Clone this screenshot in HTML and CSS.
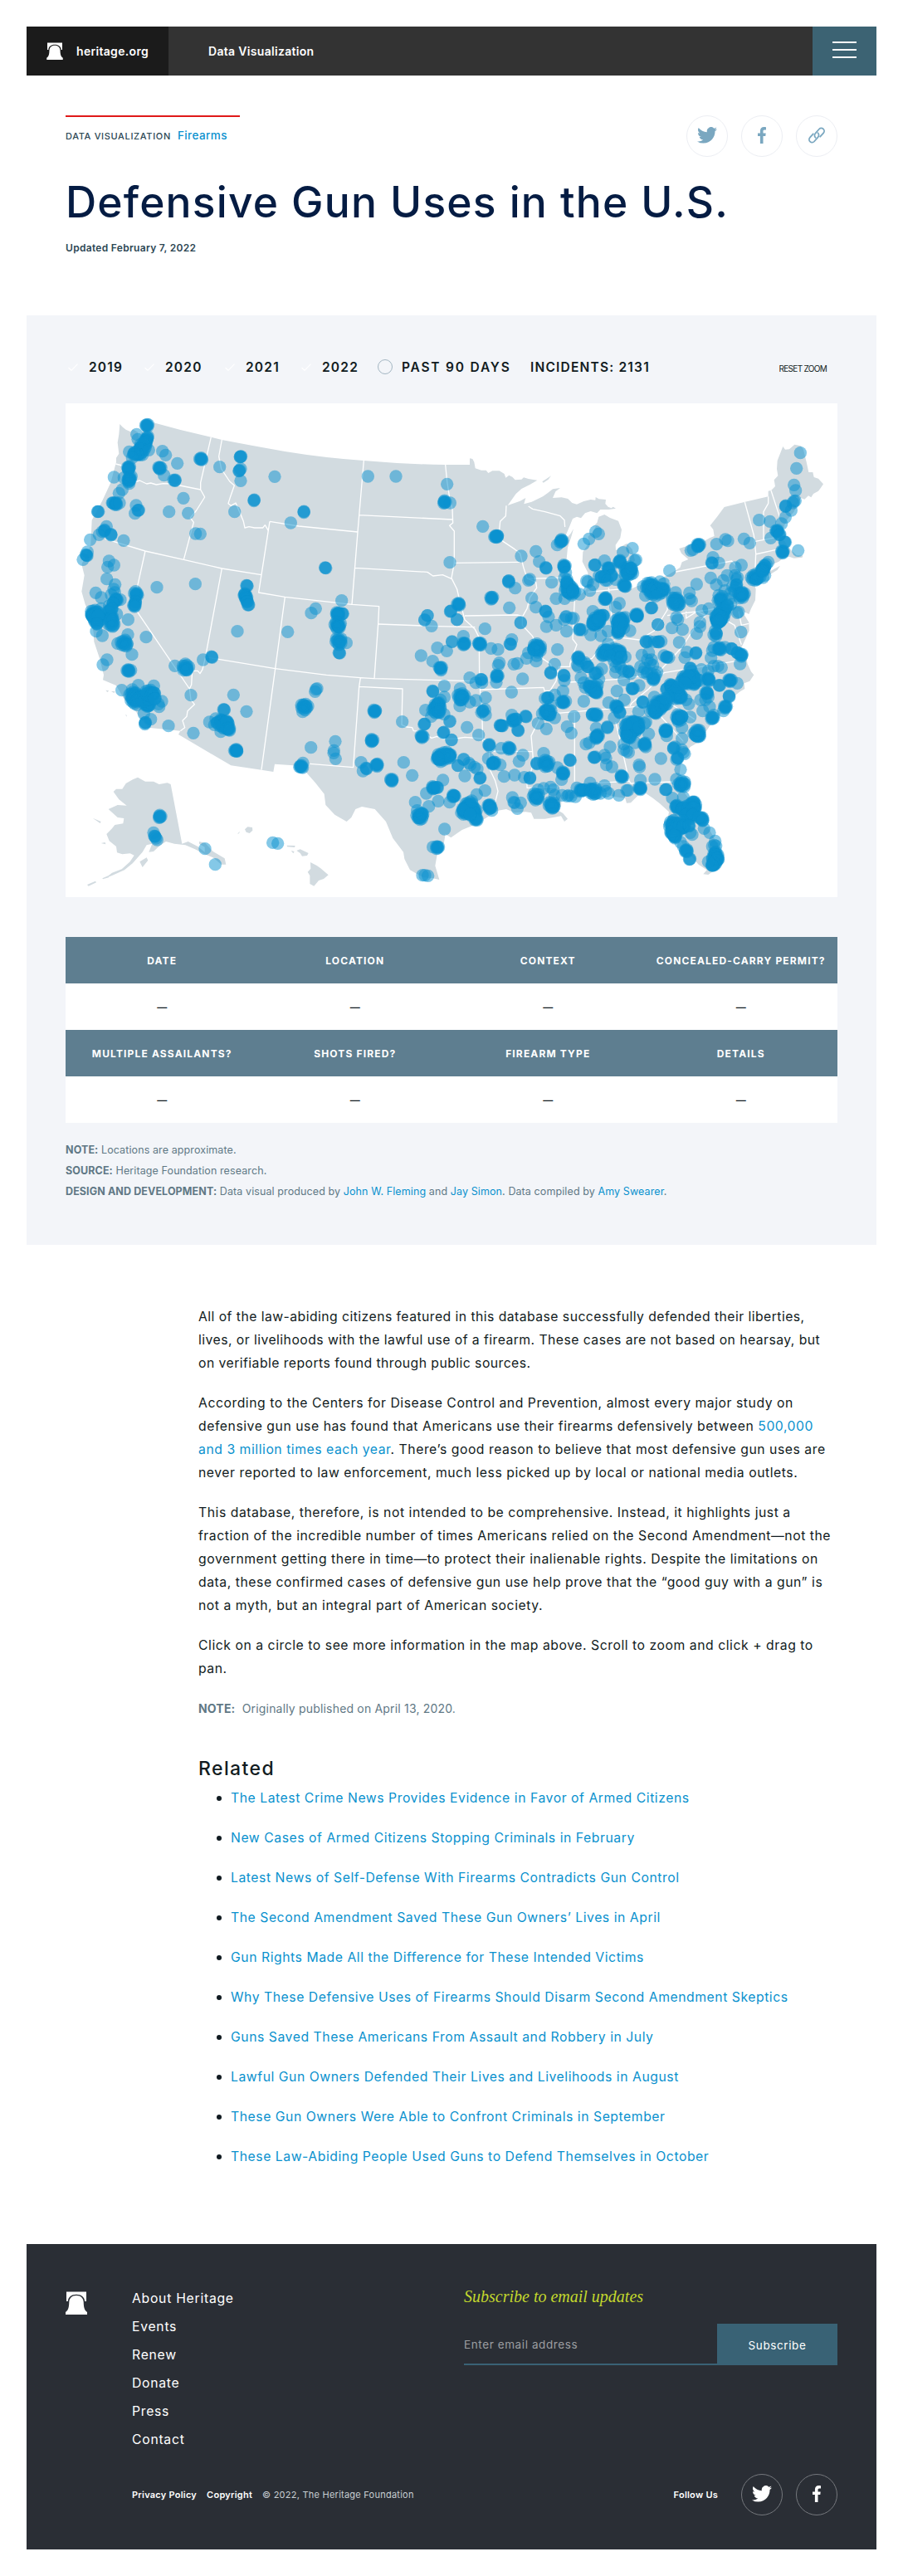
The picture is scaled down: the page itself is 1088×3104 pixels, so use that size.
FILE: index.html
```html
<!DOCTYPE html>
<html lang="en">
<head>
<meta charset="utf-8">
<title>Defensive Gun Uses in the U.S.</title>
<link rel="stylesheet" href="styles.css">
</head>
<body>
<svg class="sprite" aria-hidden="true">
  <symbol id="bell" viewBox="0 0 26 28"><path d="M1 12V0.600H25V12H23.200C22.800 7 19 3.800 13 3.800S3.200 7 2.800 12Z"/><path d="M13 5C7.500 5 4.500 8.500 4.300 13C4.100 19 3.500 22.500 0 25V28H26V25C22.500 22.500 21.900 19 21.700 13C21.500 8.500 18.500 5 13 5Z"/></symbol>
  <symbol id="twitter" viewBox="0 0 24 20"><path d="M24 2.400c-.9.400-1.800.700-2.800.8 1-.6 1.800-1.600 2.200-2.700-1 .6-2 1-3.100 1.200A4.900 4.900 0 0 0 11.900 6.200 14 14 0 0 1 1.700 1a4.900 4.900 0 0 0 1.500 6.600c-.8 0-1.600-.2-2.200-.6v.1a4.900 4.900 0 0 0 3.900 4.800c-.7.200-1.500.2-2.200.1a4.900 4.900 0 0 0 4.600 3.400A9.900 9.900 0 0 1 0 17.400 14 14 0 0 0 7.500 19.600c9.100 0 14-7.500 14-14V5c1-.7 1.800-1.600 2.500-2.600z"/></symbol>
  <symbol id="facebook" viewBox="0 0 10 20"><path d="M6.500 20V11H9.300L9.700 7.500H6.500V5.300C6.500 4.200 6.800 3.500 8.300 3.500H10V.2C9.700.100 8.600 0 7.400 0 4.700 0 2.900 1.600 2.900 4.700V7.500H0V11H2.900V20Z"/></symbol>
  <symbol id="link" viewBox="0 0 20 20"><g fill="none" stroke="currentColor" stroke-width="1.800" stroke-linecap="round"><path d="M8.600 12.800A3.600 3.600 0 0 1 8.500 7.600L13 2.500A3.500 3.500 0 0 1 18.100 7.300L14.200 11.700"/><path d="M11.400 7.200A3.600 3.600 0 0 1 11.500 12.400L7 17.500A3.500 3.500 0 0 1 1.900 12.700L5.800 8.300"/></g></symbol>
</svg>

<header class="topbar">
  <a class="brand" href="#"><svg class="brand-logo"><use href="#bell"/></svg><span class="brand-name">heritage.org</span></a>
  <span class="section">Data Visualization</span>
  <button class="menu" aria-label="Menu"><i></i><i></i><i></i></button>
</header>

<section class="hero">
  <div class="hero-row">
    <div class="kicker"><span class="type">DATA VISUALIZATION</span><a class="topic" href="#">Firearms</a></div>
    <div class="share">
      <a class="round" href="#"><svg width="24" height="20"><use href="#twitter"/></svg></a>
      <a class="round" href="#"><svg width="10" height="20"><use href="#facebook"/></svg></a>
      <a class="round" href="#"><svg width="20" height="20"><use href="#link"/></svg></a>
    </div>
  </div>
  <h1>Defensive Gun Uses in the U.S.</h1>
  <p class="updated">Updated February 7, 2022</p>
</section>

<section class="panel">
  <div class="filters">
    <label class="year y19"><svg class="tick" viewBox="0 0 12 9"><path d="M.500 5 4 8.300 11.500.700"/></svg><span>2019</span></label>
    <label class="year y20"><svg class="tick" viewBox="0 0 12 9"><path d="M.500 5 4 8.300 11.500.700"/></svg><span>2020</span></label>
    <label class="year y21"><svg class="tick" viewBox="0 0 12 9"><path d="M.500 5 4 8.300 11.500.700"/></svg><span>2021</span></label>
    <label class="year y22"><svg class="tick" viewBox="0 0 12 9"><path d="M.500 5 4 8.300 11.500.700"/></svg><span>2022</span></label>
    <label class="recent"><i class="ring"></i><span class="recent-text">PAST 90 DAYS</span></label>
    <span class="count">INCIDENTS: 2131</span>
    <button class="reset">RESET ZOOM</button>
  </div>

  <svg class="map" viewBox="57 258 2790 1785" role="img" aria-label="Map of incidents">
    <g class="land">
      <path d="M253 333L262 343 275 353 292 361 300 352 318 362 322 385 334 360 345 325 375 328Q475 357 583 380L622 390Q720 409 850 432 990 455 1135 465 1280 478 1430 480L1518 480 1518 457 1528 459 1534 470 1538 493 1560 500 1577 500 1585 510 1600 502 1625 502 1643 513 1648 527 1660 518 1672 524 1682 535 1705 533 1713 526 1730 531 1762 536 1735 552 1705 567 1685 585 1655 627 1700 611 1720 600 1714 622 1742 614 1782 595 1800 582 1818 568 1845 564 1828 577 1818 600 1850 598 1873 603 1888 618 1905 623 1930 612 1955 606 1972 608 1973 597 1985 604 2010 606 2008 621 2018 632 2030 637 2036 632 2046 638 2020 642 1990 642 1978 655 1955 648 1935 655 1920 673 1905 668 1890 675 1880 700 1865 735 1862 752 1882 730 1893 712 1885 740 1872 780 1868 820 1862 865 1870 900 1890 935 1920 948 1940 930 1946 900 1945 870 1925 830 1927 795 1950 760 1945 740 1965 720 1975 700 1962 705 1978 690 1984 668 2005 660 2025 672 2055 683 2067 715 2062 745 2045 770 2046 790 2062 778 2085 765 2105 785 2115 825 2095 865 2080 895 2075 925 2100 930 2120 920 2155 908 2200 895 2235 878 2278 852 2285 832 2308 822 2283 800 2275 783 2310 772 2350 765 2385 745 2402 738 2398 714 2387 700 2412 668 2438 633 2510 615 2597 595 2597 575 2608 572 2622 558 2618 535 2632 520 2628 495 2630 465 2650 414 2658 425 2673 424 2692 407 2715 412 2724 425 2735 470 2743 507 2758 507 2762 525 2778 530 2796 550 2788 562 2778 575 2760 585 2752 598 2742 592 2728 605 2715 600 2700 625 2690 650 2668 675 2655 700 2650 725 2642 742 2655 755 2668 775 2680 790 2700 808 2722 808 2720 815 2690 818 2672 812 2655 815 2635 830 2595 848 2575 875 2598 868 2640 845 2630 860 2590 885 2545 905 2552 930 2550 970 2535 1000 2527 1020 2510 1012 2500 1000 2512 1025 2527 1050 2528 1080 2505 1130 2500 1140 2515 1160 2522 1200 2535 1228 2545 1240 2530 1262 2510 1270 2512 1290 2495 1300 2470 1320 2450 1350 2440 1372 2410 1390 2385 1425 2365 1455 2350 1480 2315 1500 2295 1530 2280 1570 2275 1605 2290 1660 2320 1700 2352 1760 2385 1800 2412 1850 2432 1900 2420 1940 2405 1945 2380 1962 2362 1960 2375 1945 2345 1925 2310 1885 2280 1840 2245 1810 2230 1780 2238 1735 2205 1705 2180 1685 2150 1665 2130 1672 2100 1702 2085 1703 2080 1685 2040 1680 2000 1668 1940 1670 1900 1685 1850 1690 1848 1715 1830 1725 1855 1740 1872 1760 1860 1770 1848 1750 1820 1755 1790 1760 1750 1760 1740 1738 1720 1735 1680 1738 1650 1725 1620 1730 1540 1780 1490 1800 1450 1828 1430 1815 1425 1845 1405 1870 1400 1890 1393 1930 1408 1980 1385 1975 1350 1972 1302 1945 1282 1905 1278 1880 1240 1830 1215 1770 1175 1725 1128 1716 1105 1725 1090 1755 1073 1770 1030 1745 997 1710 992 1670 960 1630 925 1590 880 1567 813 1562 808 1590 765 1583 655 1567 465 1455 472 1442 355 1430 330 1400 310 1370 270 1330 240 1278 192 1258 195 1240 180 1180 160 1120 158 1085 140 1010 128 985 115 938 125 880 115 840 148 770 152 680 190 610 220 545 240 470 240 455 250 440 245 400 250 370Z"/>
      <path d="M340 541L372 520 362 533 344 545Z" transform="translate(1440 0)"/>
      <path d="M437 615L478 830 500 822 535 840 560 860 560 842 540 830 540 822 562 828 590 858 632 883 637 905 620 905 590 880 560 868 525 850 490 835 450 830 420 822 400 835 375 858 358 860 370 830 350 835 335 860 300 900 270 925 225 945 200 955 225 935 260 922 290 895 305 872 290 865 262 868 243 862 240 840 215 820 205 795 225 775 235 762 265 757 268 738 245 735 212 705 245 690 278 692 250 670 230 642 240 632 262 632 275 612 300 598 318 590 345 605 375 605 395 615 425 610Z M325 895L350 880 355 890 335 915Z M135 978L165 965 168 970 140 983Z M190 955L213 945 213 952 192 958Z M155 737L185 750 182 756Z M185 828L200 825 202 832Z" transform="translate(0 1020)"/>
      <path d="M705 778L715 769 732 771 733 782 722 792 710 788Z M678 794L687 785 684 793Z M857 836L887 837 885 843 858 841Z M872 855L884 858 880 865Z M892 855L905 850 935 864 930 873 912 875 905 864Z M942 897L965 909 978 918 1007 943 990 957 972 963 955 983 940 975 940 945 932 932 943 920Z M202 275L214 277 208 282Z M222 279L236 279 232 285Z M273 363L278 365 278 371Z" transform="translate(0 1020)"/>
    </g>
    <g class="borders">
      <path d="M238 477L262 483 M300 545 325 537 350 549 365 546 385 552 410 548 440 549 545 570 M583 380L545 545 545 570 560 597 530 645 508 672 520 688 484 823 M200 748L345 792 484 823 622 855 765 878 M622 390L611 450 620 495 650 540 667 555 652 598 645 620 655 628 672 618 690 660 700 685 705 708 720 704 740 708 770 708 778 698 790 718"/>
      <path d="M795 685L765 878 755 942 850 958 1092 985 1190 992 1187 1055 1173 1253 M795 685L900 702 1113 723 M1135 465L1113 723 1092 985 M1117 662L1455 678 M1103 853L1365 868 1385 882 1420 878 1452 892 M1430 480L1436 540 1445 600 1455 640 1457 690 1445 700 1462 720 1462 835 1452 890 1472 930 1480 965 1492 1010 1500 1040 1520 1058 1537 1075 1552 1105 1553 1262 1555 1290 1563 1400 1565 1480"/>
      <path d="M345 792L310 950 315 1010 505 1290 512 1275 515 1225 535 1225 543 1235 552 1220 562 1178 622 855 M505 1290L510 1330 523 1346 498 1370 495 1390 480 1405 488 1430 472 1442 M562 1175L610 1183 815 1217 1000 1240 1123 1250 1173 1253 1500 1261 1552 1261 M850 958L815 1217 765 1583 M1123 1250L1118 1282 1275 1290 1272 1420 1290 1428 1310 1430 1315 1442 1345 1445 1380 1468 1400 1462 1420 1472 1470 1470 1500 1465 1565 1470 1588 1482 1590 1580 1610 1622 1620 1660 1610 1700 M1118 1282L1097 1574 940 1561 M1187 1056L1400 1064 1537 1067"/>
      <path d="M1462 835L1700 832 M1500 1026L1690 1023 1710 1028 M1555 1293L1785 1285 1788 1297 1808 1297 1830 1262 1840 1210 1880 1210 1880 1200 1905 1130 1890 1110 1897 970 M1590 1515L1745 1517 1740 1460 1755 1430 1770 1400 1790 1350 1822 1300 M1745 1517L1748 1560 1725 1635 1725 1648 1835 1645 M1835 1378L2145 1352 2170 1347 2290 1480 M1897 1377L1897 1625 M1880 1266L2060 1255 2220 1232 2480 1190 M2045 1410L2060 1470 2080 1560 2095 1628 M1980 1630L2095 1624 2100 1632 2250 1626 2260 1640"/>
      <path d="M1650 628L1648 665 1628 685 1625 715 1635 755 1680 785 1700 800 1712 850 1725 890 1757 905 1760 925 1735 960 1725 1000 1708 1030 1708 1060 1745 1100 1780 1180 1810 1200 1820 1230 M1725 892L1868 888 M1730 630L1745 640 1790 650 1845 665 1860 680 1862 705 M2020 925L2035 1070 M1945 940L2080 928 M2240 900L2232 1005 2185 1080 2130 1113 2065 1105 2000 1130 1960 1180 1905 1200 M2263 867L2465 828 2480 845 2490 870 M2232 1025L2380 1005 2480 985 M2300 1010L2300 1035 2340 1010 2370 1025 2330 1070 2285 1140 2200 1230 M2512 615L2545 735 2552 800 2550 850 M2597 595L2597 620 2580 650 2580 750 M2607 573L2638 668 M2550 757L2640 740 M2550 804L2635 785 2640 810 M2120 1357L2230 1335 2330 1400 M2097 1352L2105 1340 2165 1290 2220 1232 M2490 1010L2500 1060 2527 1054 M2440 1040L2475 1060 2500 1130"/>
    </g>
    <g class="dots" id="dots"></g>
  </svg>

  <div class="table">
    <div class="tr head"><span>DATE</span><span>LOCATION</span><span>CONTEXT</span><span>CONCEALED-CARRY PERMIT?</span></div>
    <div class="tr"><span>—</span><span>—</span><span>—</span><span>—</span></div>
    <div class="tr head"><span>MULTIPLE ASSAILANTS?</span><span>SHOTS FIRED?</span><span>FIREARM TYPE</span><span>DETAILS</span></div>
    <div class="tr"><span>—</span><span>—</span><span>—</span><span>—</span></div>
  </div>

  <div class="notes">
    <p><b>NOTE:</b> Locations are approximate.</p>
    <p><b>SOURCE:</b> Heritage Foundation research.</p>
    <p><b>DESIGN AND DEVELOPMENT:</b> Data visual produced by <a href="#">John W. Fleming</a> and <a href="#">Jay Simon</a>. Data compiled by <a href="#">Amy Swearer</a>.</p>
  </div>
</section>

<article class="article">
  <p class="lead">All of the law-abiding citizens featured in this database successfully defended their liberties,<br>lives, or livelihoods with the lawful use of a firearm. These cases are not based on hearsay, but<br>on verifiable reports found through public sources.</p>
  <p>According to the Centers for Disease Control and Prevention, almost every major study on<br>defensive gun use has found that Americans use their firearms defensively between <a href="#">500,000<br>and 3 million times each year</a>. There’s good reason to believe that most defensive gun uses are<br>never reported to law enforcement, much less picked up by local or national media outlets.</p>
  <p>This database, therefore, is not intended to be comprehensive. Instead, it highlights just a<br>fraction of the incredible number of times Americans relied on the Second Amendment—not the<br>government getting there in time—to protect their inalienable rights. Despite the limitations on<br>data, these confirmed cases of defensive gun use help prove that the “good guy with a gun” is<br>not a myth, but an integral part of American society.</p>
  <p>Click on a circle to see more information in the map above. Scroll to zoom and click + drag to<br>pan.</p>
  <p class="pubnote"><b>NOTE:</b>&nbsp; Originally published on April 13, 2020.</p>
  <h2>Related</h2>
  <ul>
    <li><a href="#">The Latest Crime News Provides Evidence in Favor of Armed Citizens</a></li>
    <li><a href="#">New Cases of Armed Citizens Stopping Criminals in February</a></li>
    <li><a href="#">Latest News of Self-Defense With Firearms Contradicts Gun Control</a></li>
    <li><a href="#">The Second Amendment Saved These Gun Owners’ Lives in April</a></li>
    <li><a href="#">Gun Rights Made All the Difference for These Intended Victims</a></li>
    <li><a href="#">Why These Defensive Uses of Firearms Should Disarm Second Amendment Skeptics</a></li>
    <li><a href="#">Guns Saved These Americans From Assault and Robbery in July</a></li>
    <li><a href="#">Lawful Gun Owners Defended Their Lives and Livelihoods in August</a></li>
    <li><a href="#">These Gun Owners Were Able to Confront Criminals in September</a></li>
    <li><a href="#">These Law-Abiding People Used Guns to Defend Themselves in October</a></li>
  </ul>
</article>

<footer class="footer">
  <div class="footer-main">
    <svg class="footer-logo"><use href="#bell"/></svg>
    <nav class="links"><a href="#">About Heritage</a><a href="#">Events</a><a href="#">Renew</a><a href="#">Donate</a><a href="#">Press</a><a href="#">Contact</a></nav>
    <div class="signup">
      <h3>Subscribe to email updates</h3>
      <div class="form"><div class="field">Enter email address</div><button class="submit">Subscribe</button></div>
    </div>
  </div>
  <div class="legal">
    <a class="pp" href="#">Privacy Policy</a><a class="cr" href="#">Copyright</a><span class="c">© 2022, The Heritage Foundation</span>
    <span class="follow">Follow Us</span>
    <a class="round" href="#"><svg width="24" height="20"><use href="#twitter"/></svg></a>
    <a class="round" href="#"><svg width="10" height="20"><use href="#facebook"/></svg></a>
  </div>
</footer>
<script src="map.js"></script>
</body>
</html>
```

FILE: styles.css
```css
* { box-sizing: border-box; }
body { margin: 0; padding: 32px; background: #fff; color: #111b21; font-family: "Inter", "Liberation Sans", sans-serif; font-size: 15.75px; }
h1, h2, h3, p, ul { margin: 0; }
a { color: #0991ce; text-decoration: none; }
button { border: 0; padding: 0; background: none; font-family: inherit; color: inherit; letter-spacing: inherit; }
svg { fill: currentColor; display: block; }
.sprite { position: absolute; width: 0; height: 0; }

.topbar { display: flex; align-items: center; height: 59px; background: #333; color: #fff; font-size: 14px; font-weight: 600; letter-spacing: 0.31px; }
.brand { display: flex; align-items: center; width: 171px; height: 59px; padding-left: 24px; gap: 16px; background: #1b1b1b; color: #fff; }
.brand-logo { width: 20px; height: 21px; }
.section { margin-left: 48px; }
.menu { display: flex; flex-direction: column; align-items: center; gap: 7px; width: 77px; height: 59px; padding-top: 18px; margin-left: auto; background: #3c6373; }
.menu i { width: 29px; height: 2px; background: #fff; }

.hero { height: 289px; padding: 48px 47px 0; }
.hero-row { display: flex; justify-content: space-between; height: 50px; }
.kicker { display: flex; align-items: baseline; gap: 8px; width: 210px; height: 36px; padding-top: 14px; border-top: 2px solid #e01919; white-space: nowrap; }
.type { font-size: 11px; font-weight: 500; letter-spacing: 0.66px; color: #2b4653; }
.topic { font-size: 13.5px; font-weight: 500; letter-spacing: 0.41px; }
.share { display: flex; gap: 16px; }
.round { display: flex; align-items: center; justify-content: center; width: 50px; height: 50px; padding-bottom: 2px; border: 1px solid #eceef3; border-radius: 50%; color: #7aa7c0; }
h1 { margin-top: 23px; font-size: 51.5px; line-height: 62px; font-weight: 500; letter-spacing: 1.2px; color: #051c43; white-space: nowrap; }
.updated { margin-top: 16px; font-size: 12px; line-height: 18px; font-weight: 600; letter-spacing: 0.3px; color: #2b4653; }

.panel { height: 1120px; padding: 50px 47px 0; background: #f3f5f9; }
.filters { display: flex; align-items: center; height: 24px; font-weight: 600; font-size: 15.5px; letter-spacing: 1.2px; white-space: nowrap; }
.year { display: flex; align-items: center; gap: 13px; padding-left: 3px; }
.tick { width: 12px; height: 9px; fill: none; stroke: #fff; stroke-width: 1.2; }
.y19 { width: 92px; }
.y20 { width: 97px; }
.y21 { width: 92px; }
.y22 { width: 95px; }
.recent { display: flex; align-items: center; gap: 11px; width: 184px; }
.recent-text { letter-spacing: 1.8px; }
.ring { width: 18px; height: 18px; border: 1px solid #a3b6c2; border-radius: 50%; }
.reset { margin-left: auto; padding: 4px 13px 0 0; font-size: 10px; letter-spacing: -0.7px; }
.map { width: 930px; height: 595px; margin-top: 32px; background: #fff; }
.land { fill: #d2dbe0; }
.borders { fill: none; stroke: #fff; stroke-width: 4; stroke-linejoin: round; }
.dots { fill: #0992d0; fill-opacity: 0.5; }

.table { margin-top: 48px; background: #fff; }
.tr { display: grid; grid-template-columns: repeat(4, 1fr); height: 56px; align-items: center; text-align: center; font-size: 12px; font-weight: 600; }
.head { background: #5e7e90; color: #fff; font-weight: 700; letter-spacing: 1.15px; white-space: nowrap; }
.notes { margin-top: 20px; font-size: 12.5px; line-height: 25px; letter-spacing: 0.1px; color: #5f7885; white-space: nowrap; }

.article { height: 1204px; padding: 73px 0 0 207px; line-height: 28px; }
.article p { margin-bottom: 20px; letter-spacing: 0.54px; white-space: nowrap; }
.article .lead { letter-spacing: 0.45px; }
.article .pubnote { margin-bottom: 42px; font-size: 14px; letter-spacing: 0.18px; color: #5f7885; }
h2 { font-size: 23px; line-height: 32px; font-weight: 500; letter-spacing: 1.4px; }
ul { padding: 6px 0 0 22px; list-style: none; }
li { display: flex; align-items: center; gap: 11px; margin-bottom: 20px; letter-spacing: 0.54px; white-space: nowrap; }
li::before { content: ""; width: 6px; height: 6px; border-radius: 50%; background: #111b21; }

.footer { height: 368px; padding: 49px 47px 0; background: #2a2e35; color: #fff; }
.footer a { color: #fff; }
.footer-main { display: flex; height: 228px; }
.footer-logo { width: 26px; height: 28px; margin-top: 8px; }
.links { display: flex; flex-direction: column; width: 400px; margin-left: 54px; line-height: 34px; letter-spacing: 0.72px; }
.signup { width: 450px; }
h3 { font: italic 20px/28px "Liberation Serif", serif; color: #c3d82d; }
.form { display: flex; height: 50px; margin-top: 19px; font-size: 13.5px; letter-spacing: 0.6px; }
.field { width: 305px; border-bottom: 2px solid #396275; line-height: 50px; color: #9c9ea1; }
.submit { width: 145px; padding-top: 2px; background: #396275; font-size: 13.5px; }
.legal { display: flex; align-items: center; height: 50px; padding-left: 80px; font-size: 11px; font-weight: 600; letter-spacing: 0.24px; }
.c { font-weight: 400; color: #c8ced3; }
.cr { margin: 0 12px; }
.follow { margin: 0 28px 0 auto; }
.legal .round { border-color: #75787d; }
.legal .round + .round { margin-left: 16px; }
```

FILE: map.js
```js
// Incident clusters: each region lists x, y and the cluster weight (1 = single incident, 4 = dense metro area).
var regions = [
  { dx: 0, dy: 0, points: [
    351,338,3, 314,370,1, 318,388,1, 355,378,1, 353,383,2, 348,392,3, 345,405,3, 335,415,4, 330,425,3, 325,435,4, 320,442,2, 305,440,3, 287,433,1, 358,427,1, 298,455,1, 407,431,1, 419,445,1, 461,475,1, 547,459,3, 397,492,3, 413,518,1, 453,537,2, 447,535,1,
    285,490,3, 284,497,2, 288,530,3, 286,537,3, 295,522,1, 268,527,1, 287,548,1, 232,525,1, 262,570,1, 250,583,1, 228,618,2, 238,621,3, 252,618,1, 174,650,2, 312,627,1, 320,645,2, 308,656,1, 431,650,1, 483,601,1, 500,655,1, 527,729,1, 544,730,1,
    205,703,1, 198,718,2, 190,722,1, 222,733,2, 178,733,1, 146,751,1, 267,754,1, 136,795,1, 133,808,2, 120,823,1, 130,805,1, 214,828,1, 232,843,1, 209,850,1, 206,893,1, 236,913,1, 231,930,1, 235,942,1, 222,950,1, 166,943,1, 186,960,1, 240,968,3, 255,968,1, 228,980,2, 215,990,1,
    310,938,1, 314,950,3, 305,945,1, 310,975,2, 306,988,3, 387,923,1, 526,911,1, 713,917,2, 705,950,3, 710,962,3, 713,975,2, 718,986,2, 614,488,1, 690,450,2, 688,452,1, 690,495,1, 685,502,2, 690,538,1, 813,523,1, 738,608,2, 668,650,1, 918,650,2, 871,690,1, 1150,522,1, 1251,522,1, 1436,550,1, 1427,615,3, 1447,618,1, 1446,833,1, 996,853,2, 961,1000,1, 945,1016,1, 1055,971,1, 1037,1014,1, 1058,1018,2, 1045,1015,1, 1478,984,3, 1449,1010,2, 1365,1025,1, 1355,1040,1,
    160,1015,4, 170,1025,4, 185,1000,1, 215,1010,3, 222,1030,3, 242,1020,1, 150,1020,1, 225,1000,2 ] },
  { dx: 1440, dy: 0, points: [
    125,703,1, 178,738,2, 172,740,3, 264,810,1, 317,793,1, 329,830,1, 354,853,2, 394,770,1, 410,755,3, 404,760,1, 420,847,3, 418,850,1, 425,870,1, 490,766,1, 509,748,1, 533,722,1, 544,730,1, 530,843,2, 565,827,1, 580,855,3, 553,885,2, 568,898,1, 590,880,2, 605,895,1, 500,900,1, 505,903,1, 524,913,1, 512,935,1, 632,797,1, 666,782,1, 679,824,1, 674,826,1, 620,830,3, 650,860,4, 655,868,4, 648,875,2, 661,855,2, 637,916,3, 642,920,1, 640,880,1, 565,885,2, 545,882,1, 575,898,1,
    218,900,2, 220,905,1, 242,926,1, 290,898,1, 295,894,1, 374,905,1, 157,961,3, 221,997,1, 302,962,1, 317,995,1, 352,1010,2, 363,1030,1, 420,890,1, 430,895,1, 428,912,2, 438,925,4, 445,940,4, 435,940,3, 422,935,1, 475,948,1, 390,964,1, 421,964,1, 262,1050,1, 425,1030,1, 453,1035,1, 427,1028,1, 430,905,2, 450,935,2,
    568,965,3, 570,963,1, 619,981,1, 605,995,1, 523,1010,1, 560,1025,2, 548,1028,3, 535,1045,4, 620,1045,4, 640,1032,1, 682,1023,3, 685,1028,1, 735,997,2, 758,1058,1, 705,920,1, 716,922,1, 730,915,4, 735,930,4, 750,925,3, 742,940,4, 765,935,4, 778,932,3, 765,903,1, 780,910,1, 713,953,1, 750,955,1, 800,863,1, 898,912,1, 872,943,1, 880,972,1, 873,965,1, 822,942,1, 820,970,4, 826,978,4, 830,990,1, 835,985,1, 812,985,1, 825,1032,1,
    905,770,3, 902,775,2, 885,787,1, 877,790,1, 970,767,1, 1002,750,1, 1011,755,1, 1069,748,1, 1090,763,1, 957,815,1, 954,835,2, 979,835,1, 1060,843,1, 1038,852,1, 949,889,1, 969,914,1, 994,898,1, 1008,880,1, 1037,880,1, 1046,888,1, 1042,895,1, 1042,915,2, 1028,920,1, 1035,935,1, 1060,950,4, 1058,948,3, 1065,945,1, 1000,935,1, 978,952,1, 985,968,3, 975,970,1, 990,955,1, 1000,1000,3, 992,1012,4, 985,1025,4, 978,1035,4, 970,1040,2, 1050,1012,1, 1045,1015,1, 1022,985,1, 942,1000,1, 917,1007,1, 910,1050,1, 1040,925,1, 1020,945,1, 1015,965,1, 1010,990,2,
    1095,888,1, 1110,888,4, 1115,893,2, 1128,885,1, 1145,880,1, 1138,888,1, 1140,855,3, 1145,845,2, 1157,832,1, 1150,840,1, 1135,860,3, 1209,795,3, 1217,760,2, 1265,790,1, 1166,745,1, 1189,720,3, 1198,733,2, 1205,693,1, 1124,680,1, 1163,685,1, 1219,670,1, 1240,645,1, 1220,630,2, 1250,612,1, 1255,610,1, 1246,618,1, 1250,553,1, 1256,573,1, 1259,493,1, 1273,437,1 ] },
  { dx: 0, dy: 1020, points: [
    155,5,3, 165,10,4, 172,20,4, 170,35,2, 220,20,3, 223,32,4, 230,42,1, 283,20,1, 168,62,1, 190,78,1, 282,74,1, 245,106,1, 270,105,4, 279,110,1, 348,83,1, 297,146,1, 207,165,1, 192,183,1, 284,204,3, 293,203,1, 320,257,1, 376,259,1, 260,275,1, 298,273,1, 300,292,4, 310,300,4, 305,310,4, 318,310,3, 330,300,3, 345,312,4, 352,320,4, 355,330,3, 350,300,4, 360,285,4, 370,290,3, 378,285,2, 405,315,1, 393,325,1, 395,335,1, 380,305,2, 315,328,1, 340,360,1, 365,380,1, 345,392,2, 344,398,1, 429,404,1, 519,430,1, 452,187,1, 491,193,4, 495,200,2, 510,293,1, 554,165,1, 586,155,2, 678,62,1, 860,64,1, 664,292,1, 630,345,2, 711,352,1, 577,390,1, 600,378,1, 605,392,2, 620,385,3, 625,397,4, 635,405,4, 640,390,3, 645,415,3, 618,425,1, 595,400,1, 650,420,1, 672,493,3, 676,494,2, 1045,10,1, 1040,0,3, 1041,40,4, 1043,45,2, 1045,98,4, 1072,104,1, 1047,140,2, 1050,100,1, 966,269,1, 959,280,1, 962,272,1, 920,335,4, 926,337,1, 914,353,1, 918,330,1, 944,482,1, 1032,460,1, 1027,493,1, 1026,502,1, 1033,523,1, 915,538,1, 907,551,3, 914,555,1, 1125,536,1, 1132,567,1, 1145,558,2, 1182,545,3, 1165,457,3, 1162,458,1, 1174,351,3, 1178,350,1, 1236,600,3, 1279,536,1, 1310,583,1, 1274,389,1, 1354,397,2, 1345,443,3, 1423,427,2, 1452,454,1, 1447,387,1, 1379,370,1, 1358,347,1, 1400,335,4, 1395,345,4, 1405,325,3, 1412,310,1, 1385,279,2, 1426,260,1, 1426,300,1, 1425,362,1, 1407,355,2, 1412,345,1, 1380,43,1, 1355,22,1, 1365,5,1, 1472,20,1, 1342,150,1, 1401,122,1, 1435,133,1, 1454,99,1, 1384,170,1, 1412,195,3, 1414,203,1, 1410,517,4, 1415,520,4, 1435,512,4, 1445,510,3, 1405,522,2, 1425,500,1, 1448,520,1, 1475,547,1, 1495,525,1, 1421,600,1, 1386,628,3, 1400,627,2, 1390,630,1, 1361,648,1, 1404,676,1, 1370,695,1, 1321,680,1, 1338,730,4, 1335,735,2, 1345,722,2, 1338,743,1, 1328,710,1, 1460,657,3, 1427,777,1, 1401,843,3, 1385,842,1, 1347,944,1, 1356,944,1, 1367,946,1, 398,732,3, 375,790,1, 380,803,2, 388,816,1, 384,810,1, 561,848,1, 598,905,1, 806,826,1, 824,829,1 ] },
  { dx: 1440, dy: 1020, points: [
    32,20,1, 133,53,1, 14,100,1, 57,107,3, 55,80,1, 114,107,3, 110,105,1, 118,112,1, 155,124,1, 180,128,1, 225,108,2, 230,92,1, 262,32,1, 355,45,1, 390,40,1, 428,62,1, 420,20,1, 445,15,1, 475,55,2, 484,57,1, 533,30,4, 525,35,3, 545,20,3, 515,75,1, 552,78,1, 578,62,1, 625,25,4, 620,40,4, 615,65,3, 617,55,3, 635,50,1, 657,60,1, 680,8,2, 758,38,1, 809,50,1, 830,20,1, 847,56,1, 898,70,1, 910,45,1, 835,102,1, 395,128,1, 185,176,1, 181,185,1, 237,181,1, 250,178,1, 283,160,1, 318,120,4, 325,125,4, 310,128,2, 320,150,1, 318,170,1, 290,140,1, 177,224,3, 174,247,1, 269,234,1, 78,230,1, 120,236,2, 100,248,1, 122,248,1, 229,282,1, 43,270,1, 47,298,4, 45,310,2, 52,300,2, 42,332,1, 78,318,1, 135,302,1, 100,312,1, 125,350,2, 120,355,1, 135,365,1, 133,345,1, 370,212,2, 385,181,1, 418,222,2, 420,240,1, 470,158,3, 467,185,1, 495,175,1, 505,190,2, 480,230,1, 415,278,1, 385,292,1, 360,302,2, 350,305,1, 415,318,3, 425,315,1, 490,315,1, 565,140,4, 570,130,2, 558,150,1, 600,135,4, 620,137,3, 610,160,2, 640,155,1, 618,180,1, 578,108,1, 715,100,2, 725,98,1, 745,100,1, 760,100,2, 700,148,1, 725,140,1, 780,150,1, 790,155,2, 798,157,1, 735,165,1, 740,185,1, 855,157,1, 863,137,1, 895,140,2, 950,158,1, 955,132,1, 980,125,3, 985,130,1, 970,70,2, 968,80,1, 978,15,4, 985,20,3, 975,30,3, 1058,65,1, 1025,125,2, 1045,140,2, 1060,148,3, 1055,180,1, 975,188,1, 988,193,1, 875,195,2, 880,205,1, 940,205,1,
    600,170,1, 585,150,1, 605,190,1, 625,155,2, 545,235,1, 490,248,1, 495,265,1, 720,165,1, 730,178,1, 710,195,1, 755,210,1, 770,98,1, 480,170,1, 500,182,1, 470,190,1, 960,75,1, 965,60,1, 1000,120,1, 960,120,1, 960,188,1,
    555,198,1, 532,215,2, 540,210,1, 605,210,1, 635,205,1, 652,208,2, 660,215,1, 625,195,1, 695,190,1, 705,210,1, 720,208,1, 735,215,1, 742,233,3, 750,220,1, 718,215,1, 690,258,1, 665,270,2, 670,268,1, 635,238,1, 610,278,1, 637,310,1, 510,260,2, 525,270,4, 535,282,3, 540,255,1, 515,248,1, 580,320,1, 610,335,3, 605,330,1, 620,355,2, 600,375,1, 520,363,2, 535,365,3, 525,360,1, 688,352,1, 703,318,2, 745,300,1, 755,315,1, 770,325,4, 780,320,4, 760,335,4, 748,345,4, 750,355,3, 740,330,1, 790,270,2, 805,258,3, 815,270,4, 825,285,4, 830,295,4, 840,300,3, 860,310,1, 855,235,4, 870,240,4, 885,235,4, 890,250,3, 885,225,3, 870,225,2, 840,245,1, 855,250,2, 915,240,1, 940,235,3, 945,240,1, 980,258,2, 1018,240,3, 1025,238,1, 1045,250,1, 915,200,1, 935,285,3, 940,300,1, 930,310,1, 912,310,1, 920,350,1, 945,335,1, 955,375,3, 960,365,1, 1002,335,3, 995,350,1, 1015,297,2, 835,375,4, 830,378,2, 845,370,2, 875,372,1, 870,325,1, 795,300,1, 785,305,1, 730,350,1, 905,238,1, 830,265,1,
    455,370,1, 360,355,4, 365,362,3, 355,350,3, 340,360,1, 385,375,1, 325,395,1, 355,415,1, 370,330,1, 430,407,1, 445,430,1, 235,385,3, 245,380,2, 230,365,1, 280,370,2, 253,420,2, 188,403,2, 195,403,2, 68,409,1, 110,437,1, 12,455,1, 5,388,1, 220,485,3, 192,485,1, 148,473,2, 150,478,1, 270,510,1, 256,532,1, 165,538,3, 160,540,2, 145,522,1, 188,545,1, 345,503,1, 320,540,2, 355,540,4, 358,550,1, 395,555,1, 440,528,2, 415,575,3, 418,578,1, 410,598,1, 57,525,1, 75,538,1, 80,545,1, 35,548,1, 95,553,1, 105,560,1, 60,585,1, 115,592,2, 202,587,1, 240,582,1, 275,590,1, 295,592,2, 535,412,1, 575,409,2, 540,440,3, 535,445,3, 510,465,1, 498,470,1, 528,518,2, 532,516,1, 565,510,1, 570,520,1, 585,480,1, 572,545,1, 592,552,1, 627,587,3, 655,400,4, 665,405,4, 660,420,4, 650,425,4, 675,415,4, 685,395,3, 670,390,3, 655,445,3, 645,440,2, 690,410,2, 640,400,1, 710,395,1, 715,390,1, 725,433,1, 710,470,3, 714,480,1, 635,470,1, 645,495,1, 652,500,1, 635,490,1, 675,465,1, 788,420,3, 785,425,2, 790,440,1, 845,410,1, 845,450,1, 900,430,4, 905,440,3, 895,438,2, 903,420,1, 815,485,2, 820,480,1, 845,490,1, 850,500,1, 830,520,2, 825,525,1, 855,505,1, 769,522,1, 690,545,1, 692,552,1, 840,562,1, 695,600,1, 694,630,3, 697,628,1, 747,597,1, 787,635,2, 825,597,1, 845,615,4, 840,618,2, 855,615,1, 810,665,1, 850,662,1,
    345,630,1, 325,635,1, 370,625,1, 380,635,1, 385,655,1, 318,660,4, 320,665,2, 375,690,4, 378,695,3, 372,688,1, 412,655,1, 435,655,1, 430,658,1, 445,658,1, 460,660,1, 465,628,1, 480,637,3, 490,635,2, 513,610,1, 515,635,3, 527,642,4, 530,650,1, 565,620,1, 570,640,1, 580,648,1, 550,648,1, 617,655,1, 650,637,1, 645,637,1, 133,638,1, 103,652,1, 232,663,1, 240,682,1, 262,682,1, 250,703,1, 237,680,1, 20,657,1, 75,690,4, 80,700,4, 65,705,4, 90,710,4, 60,715,4, 95,720,3, 55,708,2, 100,740,3, 105,745,1, 85,675,1, 80,725,2, 148,692,3, 152,700,3, 158,710,1, 5,680,1,
    825,695,3, 830,705,1, 845,705,3, 860,705,4, 875,710,4, 885,690,4, 888,680,2, 890,700,3, 870,730,4, 885,725,2, 915,738,3, 920,745,2, 905,735,1, 815,745,1, 810,760,4, 820,765,4, 830,775,4, 815,785,4, 810,790,3, 845,760,4, 850,770,3, 870,765,2, 875,790,1, 882,797,1, 820,805,3, 815,800,2, 840,825,1, 850,840,1, 862,855,3, 857,858,1, 873,885,2, 925,775,1, 945,790,1, 965,820,1, 962,835,1, 955,840,1, 968,838,1, 965,865,3, 967,880,4, 965,890,4, 970,885,3, 960,905,3, 953,908,2, 940,895,1 ] }
];

// Incidents drawn per cluster weight, and how far they scatter round its centre.
var counts = [0, 1, 3, 6, 11];
var spreads = [0, 0, 3, 6, 14];

var layer = document.getElementById('dots');
regions.forEach(function (region) {
  for (var i = 0; i < region.points.length; i += 3) {
    var weight = region.points[i + 2];
    for (var n = 0; n < counts[weight]; n++) {
      var radius = spreads[weight] * Math.sqrt(n / counts[weight]);
      var angle = n * 2.4 + i;
      var dot = document.createElementNS('http://www.w3.org/2000/svg', 'circle');
      dot.setAttribute('cx', region.points[i] + region.dx + radius * Math.cos(angle));
      dot.setAttribute('cy', region.points[i + 1] + region.dy + radius * Math.sin(angle));
      dot.setAttribute('r', 23);
      layer.appendChild(dot);
    }
  }
});
```
